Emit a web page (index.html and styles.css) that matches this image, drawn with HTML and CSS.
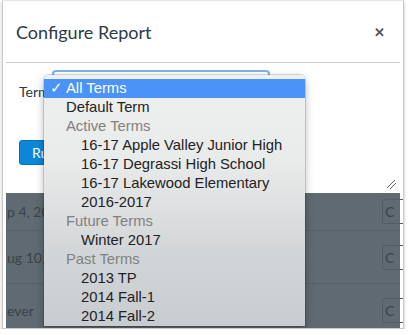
FILE: index.html
```html
<!DOCTYPE html>
<html lang="en">
<head>
    <meta charset="UTF-8">
    <meta name="viewport" content="width=device-width, initial-scale=1.0">
    <title>Configure Report</title>
    <link rel="stylesheet" href="styles.css">
</head>
<body>
    <div class="window">
        <div class="modal-header">
            <h1>Configure Report</h1>
            <span class="close">&#x2715;</span>
        </div>
        <div class="modal-body">
            <div class="field">
                <label for="term">Term</label>
                <div class="select" id="term"></div>
            </div>
            <button class="run">Run</button>
            <span class="grip"></span>
        </div>
        <div class="table">
            <div class="row"><span class="cell">p 4, 20</span><span class="btn">C</span></div>
            <div class="row"><span class="cell">ug 10,</span><span class="btn">C</span></div>
            <div class="row"><span class="cell">ever</span><span class="btn">C</span></div>
        </div>

        <ul class="menu">
            <li class="selected"><span class="check">&#x2713;</span>All Terms</li>
            <li>Default Term</li>
            <li class="group">Active Terms</li>
            <li class="sub">16-17 Apple Valley Junior High</li>
            <li class="sub">16-17 Degrassi High School</li>
            <li class="sub">16-17 Lakewood Elementary</li>
            <li class="sub">2016-2017</li>
            <li class="group">Future Terms</li>
            <li class="sub">Winter 2017</li>
            <li class="group">Past Terms</li>
            <li class="sub">2013 TP</li>
            <li class="sub">2014 Fall-1</li>
            <li class="sub">2014 Fall-2</li>
        </ul>
    </div>
</body>
</html>
```

FILE: styles.css
```css
body{
    margin: 0;
    background: #fff;
    font-family: "Liberation Sans", Arial, sans-serif;
}
.window{
    position: relative;
    margin: 0 2px;
    width: 402px;
    height: 329px;
    box-sizing: border-box;
    border: 1px solid #c9c9c9;
    border-top-color: #e6e6e6;
    background: #fff;
    padding: 0 3px;
    overflow: hidden;
    box-shadow: 0 2px 3px rgba(0,0,0,0.25);
}
.modal-header{
    display: flex;
    align-items: center;
    justify-content: space-between;
    height: 61px;
    padding: 0 15px 0 10px;
    border-bottom: 1px solid #c7cdd1;
}
h1{
    margin: 0;
    font-family: Lato, sans-serif;
    font-weight: 400;
    font-size: 18px;
    color: #2d3b45;
    padding-top: 1px;
}
.close{
    font-size: 13px;
    font-weight: bold;
    color: #555;
    padding-top: 2px;
}
.modal-body{
    position: relative;
    height: 130px;
    padding: 7px 0 0 13px;
    box-sizing: border-box;
}
.field{
    display: flex;
    align-items: flex-start;
}
label{
    font-family: Lato, sans-serif;
    font-size: 14px;
    color: #2d3b45;
    margin-top: 13px;
    width: 33px;
}
.select{
    width: 218px;
    height: 36px;
    border: 2px solid #7fb2ea;
    border-radius: 4px;
    box-sizing: border-box;
}
.run{
    margin-top: 34px;
    background: #0b87da;
    border: 1px solid #0770b8;
    border-radius: 3px;
    color: #fff;
    font-family: Lato, sans-serif;
    font-size: 14px;
    height: 25px;
    padding: 0 12px;
}
.grip{
    position: absolute;
    right: 4px;
    bottom: 4px;
    width: 9px;
    height: 9px;
    background: linear-gradient(135deg, transparent 40%, #666 40%, #666 48%, transparent 48%, transparent 64%, #666 64%, #666 72%, transparent 72%);
}
.table{
    background: #5f6a72;
    height: 140px;
}
.row{
    display: flex;
    align-items: center;
    justify-content: space-between;
    height: 52px;
    border-bottom: 1px solid #566068;
    color: #3a434a;
    font-family: Lato, sans-serif;
    font-size: 14px;
}
.row:first-child{
    height: 37px;
}
.btn{
    width: 22px;
    height: 23px;
    margin-right: -8px;
    border: 1px solid #535d65;
    border-radius: 3px;
    line-height: 23px;
    padding-left: 2px;
    font-size: 14px;
}
.cell{
    padding-left: 1px;
}
.menu{
    position: absolute;
    left: 41px;
    top: 74px;
    width: 261px;
    margin: 0;
    padding: 4px 0 0;
    list-style-type: none;
    border-radius: 5px 5px 0 0;
    background: linear-gradient(180deg, #eff0f0 0%, #e9eaea 35%, #d3d6d8 70%, #c8ccd0 100%);
    box-shadow: 0 0 0 1px rgba(0,0,0,0.12), 0 3px 8px rgba(0,0,0,0.3);
    font-size: 14.8px;
}
.menu li{
    height: 19px;
    line-height: 19px;
    padding-left: 22px;
    color: #222;
}
.menu li.selected{
    background: #4b93f6;
    color: #fff;
    position: relative;
}
.check{
    position: absolute;
    left: 6px;
}
.menu li.group{
    color: #808080;
}
.menu li.sub{
    padding-left: 37px;
}
```
